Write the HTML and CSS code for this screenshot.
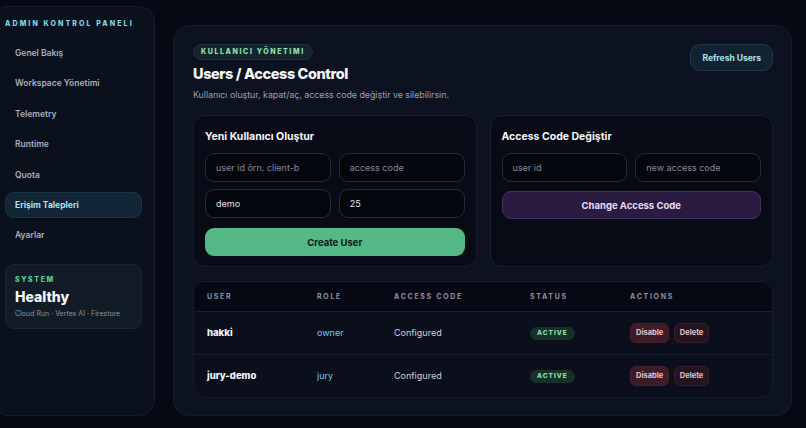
FILE: index.html
```html
<!DOCTYPE html>
<html lang="tr">
<head>
    <meta charset="UTF-8">
    <meta name="viewport" content="width=device-width, initial-scale=1.0">
    <title>Admin Kontrol Paneli</title>
    <link rel="stylesheet" href="styles.css">
</head>
<body>

<div class="app">
    <aside class="sidebar">
        <div class="brand">ADMIN KONTROL PANELI</div>
        <nav class="nav">
            <a class="nav-item">Genel Bakış</a>
            <a class="nav-item">Workspace Yönetimi</a>
            <a class="nav-item">Telemetry</a>
            <a class="nav-item">Runtime</a>
            <a class="nav-item">Quota</a>
            <a class="nav-item active">Erişim Talepleri</a>
            <a class="nav-item">Ayarlar</a>
        </nav>
        <div class="system-card">
            <div class="system-label">SYSTEM</div>
            <div class="system-status">Healthy</div>
            <div class="system-meta">Cloud Run · Vertex AI · Firestore</div>
        </div>
    </aside>

    <main class="panel">
        <header class="panel-head">
            <div>
                <span class="badge">KULLANICI YÖNETIMI</span>
                <h1>Users / Access Control</h1>
                <p class="subtitle">Kullanıcı oluştur, kapat/aç, access code değiştir ve silebilirsin.</p>
            </div>
            <button class="btn-refresh">Refresh Users</button>
        </header>

        <div class="cards">
            <section class="card">
                <h2>Yeni Kullanıcı Oluştur</h2>
                <div class="field-grid">
                    <input type="text" placeholder="user id örn. client-b">
                    <input type="text" placeholder="access code">
                    <input type="text" value="demo">
                    <input type="text" value="25">
                </div>
                <button class="btn-create">Create User</button>
            </section>

            <section class="card">
                <h2>Access Code Değiştir</h2>
                <div class="field-grid">
                    <input type="text" placeholder="user id">
                    <input type="text" placeholder="new access code">
                </div>
                <button class="btn-change">Change Access Code</button>
            </section>
        </div>

        <div class="table-wrap">
            <table class="users">
                <thead>
                    <tr>
                        <th class="col-user">USER</th>
                        <th class="col-role">ROLE</th>
                        <th class="col-code">ACCESS CODE</th>
                        <th class="col-status">STATUS</th>
                        <th class="col-actions">ACTIONS</th>
                    </tr>
                </thead>
                <tbody>
                    <tr>
                        <td class="user-name">hakki</td>
                        <td class="role">owner</td>
                        <td class="code">Configured</td>
                        <td class="status"><span class="pill">ACTIVE</span></td>
                        <td class="actions">
                            <button class="btn-disable">Disable</button>
                            <button class="btn-delete">Delete</button>
                        </td>
                    </tr>
                    <tr>
                        <td class="user-name">jury-demo</td>
                        <td class="role">jury</td>
                        <td class="code">Configured</td>
                        <td class="status"><span class="pill">ACTIVE</span></td>
                        <td class="actions">
                            <button class="btn-disable">Disable</button>
                            <button class="btn-delete">Delete</button>
                        </td>
                    </tr>
                </tbody>
            </table>
        </div>
    </main>
</div>

</body>
</html>
```

FILE: styles.css
```css
* {
    box-sizing: border-box;
}

body {
    margin: 0;
    background-color: #060913;
    font-family: Inter, "Noto Sans", sans-serif;
    color: #e8ebf2;
    overflow: hidden;
}

.app {
    display: flex;
    gap: 18px;
    margin-left: -8px;
    padding-top: 6px;
}

/* sidebar */
.sidebar {
    width: 163px;
    height: 410px;
    flex-shrink: 0;
    padding: 12px;
    background-color: #0b101d;
    border: 1px solid #181e2c;
    border-radius: 16px;
}

.brand {
    font-size: 7px;
    font-weight: 800;
    letter-spacing: 2.1px;
    color: #7fd6e6;
    line-height: 9px;
    white-space: nowrap;
}

.nav {
    display: flex;
    flex-direction: column;
    gap: 4.4px;
    margin-top: 12px;
}

.nav-item {
    display: block;
    height: 26px;
    line-height: 24px;
    padding: 0 9px;
    font-size: 8.5px;
    font-weight: 600;
    color: #a9b0bf;
    border-radius: 9px;
    border: 1px solid transparent;
}

.nav-item.active {
    background-color: #132636;
    border-color: #1d3546;
    color: #a8e3f0;
    font-weight: 700;
}

.system-card {
    margin-top: 16px;
    padding: 10px 9px;
    background-color: #121c26;
    border: 1px solid #1a2632;
    border-radius: 9px;
}

.system-label {
    font-size: 7px;
    font-weight: 800;
    letter-spacing: 1.6px;
    color: #5fcf95;
}

.system-status {
    font-size: 14px;
    font-weight: 800;
    color: #f4f6fa;
    margin-top: 4px;
    line-height: 18px;
}

.system-meta {
    font-size: 7px;
    color: #8b93a3;
    margin-top: 3px;
}

/* main panel */
.panel {
    width: 619px;
    height: 391px;
    margin-top: 19px;
    padding: 18px 18px 18px 19px;
    background-color: #0d1220;
    border: 1px solid #161c2b;
    border-radius: 16px;
}

.panel-head {
    display: flex;
    justify-content: space-between;
    align-items: flex-start;
}

.badge {
    display: block;
    width: fit-content;
    padding: 3px 7px;
    font-size: 7px;
    font-weight: 800;
    letter-spacing: 1.6px;
    color: #8fe0b4;
    background-color: #15252a;
    border: 1px solid #1f3136;
    border-radius: 10px;
    line-height: 8px;
}

h1 {
    margin: 5px 0 0;
    font-size: 14.5px;
    font-weight: 800;
    color: #f5f7fb;
    letter-spacing: -0.4px;
}

.subtitle {
    margin: 7px 0 0;
    font-size: 8.8px;
    color: #9aa1b0;
}

.btn-refresh {
    height: 27px;
    padding: 0 11px;
    font-family: inherit;
    font-size: 8.5px;
    font-weight: 700;
    color: #a8e3f0;
    background-color: #122231;
    border: 1px solid #20384a;
    border-radius: 10px;
}

/* form cards */
.cards {
    display: grid;
    grid-template-columns: 1fr 1fr;
    gap: 13px;
    margin-top: 15px;
}

.card {
    height: 152px;
    padding: 13px 11px 12px;
    background-color: #080b16;
    border: 1px solid #181e2c;
    border-radius: 12px;
}

.card h2 {
    margin: 1px 0 0;
    font-size: 10.5px;
    font-weight: 700;
    color: #f4f6fa;
}

.field-grid {
    display: grid;
    grid-template-columns: 1fr 1fr;
    gap: 7px 8px;
    margin-top: 10px;
}

input {
    height: 29px;
    width: 100%;
    padding: 0 10px;
    font-family: inherit;
    font-size: 9px;
    color: #e2e5ec;
    background-color: #05070f;
    border: 1px solid #252b3a;
    border-radius: 9px;
}

input::placeholder {
    color: #838a9a;
}

.btn-create, .btn-change {
    width: 100%;
    height: 28px;
    font-family: inherit;
    font-size: 9.5px;
    font-weight: 700;
    border-radius: 9px;
}

.btn-create {
    margin-top: 10px;
    background-color: #54b986;
    color: #0b1a12;
    border: none;
}

.btn-change {
    margin-top: 9px;
    background-color: #2a1b40;
    color: #e8dcf2;
    border: 1px solid #45305f;
}

/* users table */
.table-wrap {
    margin-top: 14px;
    border: 1px solid #181e2c;
    border-radius: 12px;
    overflow: hidden;
    background-color: #0b0f1b;
}

.users {
    width: 100%;
    border-collapse: collapse;
}

.users th {
    height: 29px;
    padding: 0;
    text-align: left;
    font-size: 7px;
    font-weight: 700;
    letter-spacing: 1.7px;
    color: #8c93a2;
    background-color: #060914;
    border-bottom: 1px solid #181e2c;
}

.users td {
    height: 43px;
    padding: 0;
    font-size: 9px;
    border-bottom: 1px solid #181e2c;
}

.users tr:last-child td {
    border-bottom: none;
}

.users .col-user, .users .user-name {
    width: 123px;
    padding-left: 13px;
}

.users .col-role { width: 77px; }
.users .col-code { width: 136px; }
.users .col-status { width: 100px; }

.user-name {
    font-weight: 800;
    color: #f5f7fb;
}

.users td.user-name {
    font-size: 9.5px;
}

.role {
    color: #6fd0e8;
}

.code {
    color: #cdd1da;
}

.pill {
    display: inline-block;
    padding: 3px 7px;
    font-size: 6.5px;
    font-weight: 800;
    letter-spacing: 1px;
    color: #8fe0b4;
    background-color: #16302a;
    border-radius: 8px;
    line-height: 7px;
}

.actions button {
    height: 20px;
    padding: 0 5px;
    font-family: inherit;
    font-size: 7.5px;
    font-weight: 700;
    border-radius: 6px;
    margin-right: 2px;
}

.btn-disable {
    background-color: #3d1c27;
    color: #e3c3cb;
    border: 1px solid #46212d;
}

.btn-delete {
    background-color: #24141d;
    color: #e3c3cb;
    border: 1px solid #3c1f2a;
}
```
